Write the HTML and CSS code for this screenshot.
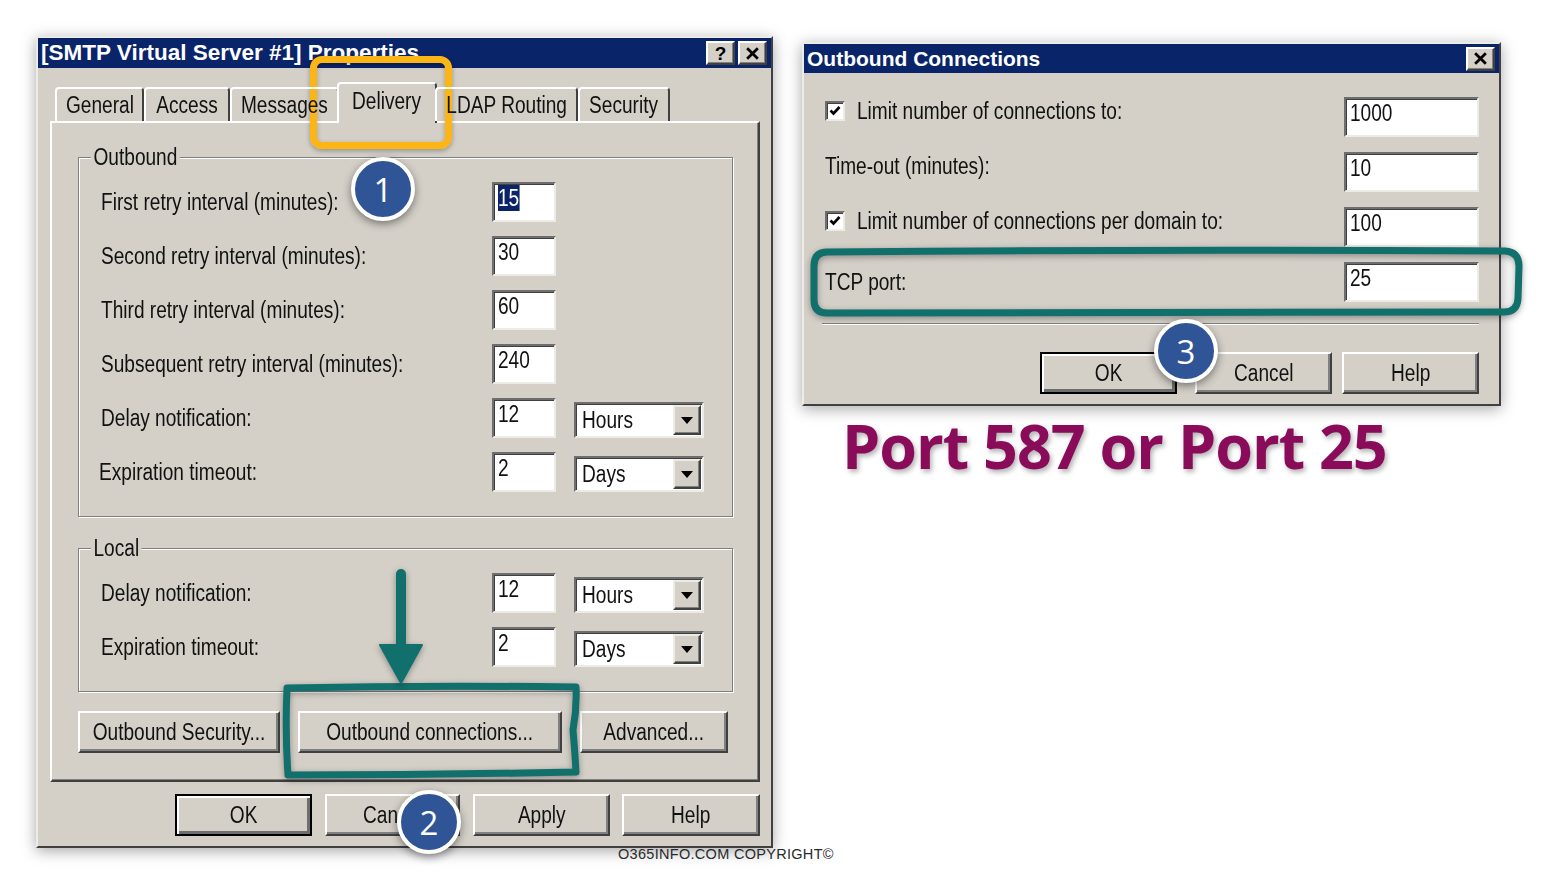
FILE: index.html
```html
<!DOCTYPE html>
<html>
<head>
<meta charset="utf-8">
<title>SMTP Outbound Connections</title>
<link rel="stylesheet" href="styles.css">
</head>
<body>
<div class="page">
  <div class="col-left">
    <div class="dlg dlg-main">
      <div class="titlebar">
        <span class="title">[SMTP Virtual Server #1] Properties</span>
        <div class="tb-btns">
          <span class="tbb tbb-q">?</span>
          <span class="tbb"><svg class="xicon" viewBox="0 0 14 12"><path d="M2 1 L12 11 M12 1 L2 11" stroke="#000" stroke-width="2.6" fill="none"/></svg></span>
        </div>
      </div>
      <div class="main-body">
        <div class="tabs">
          <div class="tab tab-general"><span class="t">General</span></div>
          <div class="tab tab-access"><span class="t">Access</span></div>
          <div class="tab tab-messages"><span class="t">Messages</span></div>
          <div class="tab tab-delivery active"><span class="t">Delivery</span></div>
          <div class="tab tab-ldap"><span class="t">LDAP Routing</span></div>
          <div class="tab tab-security"><span class="t">Security</span></div>
        </div>
        <div class="panel">
          <div class="group">
            <div class="legend"><span class="t">Outbound</span></div>
            <div class="rows">
              <div class="lbl"><span class="t">First retry interval (minutes):</span></div>
              <div class="input"><span class="t"><span class="sel">15</span></span></div>
              <div></div>
              <div class="lbl"><span class="t">Second retry interval (minutes):</span></div>
              <div class="input"><span class="t">30</span></div>
              <div></div>
              <div class="lbl"><span class="t">Third retry interval (minutes):</span></div>
              <div class="input"><span class="t">60</span></div>
              <div></div>
              <div class="lbl"><span class="t">Subsequent retry interval (minutes):</span></div>
              <div class="input"><span class="t">240</span></div>
              <div></div>
              <div class="lbl"><span class="t">Delay notification:</span></div>
              <div class="input"><span class="t">12</span></div>
              <div class="combo"><span class="combo-text"><span class="t">Hours</span></span><span class="combo-btn"><svg class="tri" viewBox="0 0 12 7"><path d="M0 0 H12 L6 7 Z" fill="#000"/></svg></span></div>
              <div class="lbl lbl-shift"><span class="t">Expiration timeout:</span></div>
              <div class="input"><span class="t">2</span></div>
              <div class="combo"><span class="combo-text"><span class="t">Days</span></span><span class="combo-btn"><svg class="tri" viewBox="0 0 12 7"><path d="M0 0 H12 L6 7 Z" fill="#000"/></svg></span></div>
            </div>
          </div>
          <div class="group group-local">
            <div class="legend"><span class="t">Local</span></div>
            <div class="rows">
              <div class="lbl"><span class="t">Delay notification:</span></div>
              <div class="input"><span class="t">12</span></div>
              <div class="combo"><span class="combo-text"><span class="t">Hours</span></span><span class="combo-btn"><svg class="tri" viewBox="0 0 12 7"><path d="M0 0 H12 L6 7 Z" fill="#000"/></svg></span></div>
              <div class="lbl"><span class="t">Expiration timeout:</span></div>
              <div class="input"><span class="t">2</span></div>
              <div class="combo"><span class="combo-text"><span class="t">Days</span></span><span class="combo-btn"><svg class="tri" viewBox="0 0 12 7"><path d="M0 0 H12 L6 7 Z" fill="#000"/></svg></span></div>
            </div>
          </div>
          <div class="btn-row">
            <div class="btn b-osec"><span class="t">Outbound Security...</span></div>
            <div class="btn b-ocon"><span class="t">Outbound connections...</span></div>
            <div class="btn b-adv"><span class="t">Advanced...</span></div>
          </div>
        </div>
        <div class="footer">
          <div class="btn btn-default b-ok"><span class="t">OK</span></div>
          <div class="btn b-cancel"><span class="t">Cancel</span></div>
          <div class="btn b-apply"><span class="t">Apply</span></div>
          <div class="btn b-help"><span class="t">Help</span></div>
        </div>
      </div>
    </div>
    <div class="copyright">O365INFO.COM COPYRIGHT©</div>
  </div>

  <div class="col-right">
    <div class="dlg dlg-conn">
      <div class="titlebar titlebar-conn">
        <span class="title title-conn">Outbound Connections</span>
        <div class="tb-btns">
          <span class="tbb"><svg class="xicon" viewBox="0 0 14 12"><path d="M2 1 L12 11 M12 1 L2 11" stroke="#000" stroke-width="2.6" fill="none"/></svg></span>
        </div>
      </div>
      <div class="conn-body">
        <div class="conn-rows">
          <div class="lbl chk-lbl lbl-up"><span class="check"><svg viewBox="0 0 14 14"><path d="M2.5 6.5 L5.5 9.5 L11.5 3" stroke="#000" stroke-width="2.6" fill="none"/></svg></span><span class="t">Limit number of connections to:</span></div>
          <div class="input"><span class="t">1000</span></div>
          <div class="lbl lbl-up"><span class="t">Time-out (minutes):</span></div>
          <div class="input"><span class="t">10</span></div>
          <div class="lbl chk-lbl lbl-up"><span class="check"><svg viewBox="0 0 14 14"><path d="M2.5 6.5 L5.5 9.5 L11.5 3" stroke="#000" stroke-width="2.6" fill="none"/></svg></span><span class="t">Limit number of connections per domain to:</span></div>
          <div class="input"><span class="t">100</span></div>
          <div class="lbl"><span class="t">TCP port:</span></div>
          <div class="input"><span class="t">25</span></div>
        </div>
        <div class="sep"></div>
        <div class="conn-footer">
          <div class="btn btn-default b-cok"><span class="t">OK</span></div>
          <div class="btn b-ccancel"><span class="t">Cancel</span></div>
          <div class="btn b-chelp"><span class="t">Help</span></div>
        </div>
      </div>
    </div>
    <div class="port">Port 587 or Port 25</div>
  </div>
</div>

<div class="hl-yellow"></div>

<svg class="ann ann-rect1" viewBox="0 0 310 105" width="310" height="105">
  <path d="M9 10 Q150 7 298 9 Q299 30 295 52 Q297 75 298 94 Q150 97 10 97 Q7 55 9 10 Z" fill="none" stroke="#11706b" stroke-width="7" stroke-linejoin="round"/>
</svg>
<svg class="ann ann-rect2" viewBox="0 0 725 82" width="725" height="82">
  <path d="M22 10 Q360 7 700 9 Q714 10 714 24 L713 57 Q712 70 699 70 Q360 72 22 71 Q9 71 9 58 L9 24 Q9 10 22 10 Z" fill="none" stroke="#11706b" stroke-width="7" stroke-linejoin="round"/>
</svg>
<svg class="ann ann-arrow" viewBox="0 0 52 125" width="52" height="125">
  <path d="M26 9 L26 84" stroke="#11706b" stroke-width="10" stroke-linecap="round"/>
  <path d="M5 80 L47 80 L26 118 Z" fill="#11706b" stroke="#11706b" stroke-width="2" stroke-linejoin="round"/>
</svg>

<div class="badge badge-1">1</div>
<div class="badge badge-2">2</div>
<div class="badge badge-3">3</div>
</body>
</html>
```

FILE: styles.css
```css
* { box-sizing: border-box; }
html, body { margin: 0; padding: 0; background: #fff; }
body {
  width: 1557px;
  height: 894px;
  overflow: hidden;
  position: relative;
  font-family: "Liberation Sans", Arial, sans-serif;
  color: #111;
}

/* narrow "MS Sans Serif"-like text: Arial metrics squeezed horizontally */
.t {
  display: inline-block;
  white-space: nowrap;
  transform: scaleX(0.83);
  transform-origin: left center;
}

.page {
  display: flex;
  align-items: flex-start;
  padding: 36px 0 0 36px;
  gap: 29px;
}

.col-left { width: 737px; flex: none; display: flex; flex-direction: column; }
.col-right { width: 699px; flex: none; display: flex; flex-direction: column; padding-top: 6px; }

/* ---------- window chrome ---------- */
.dlg {
  background: #d4d0c8;
  border: 2px solid;
  border-color: #ecebe6 #404040 #404040 #ecebe6;
  box-shadow: 0 3px 14px rgba(0, 0, 0, 0.35);
}
.dlg-main { width: 737px; }
.dlg-conn { width: 699px; }

.titlebar {
  height: 30px;
  background: #0a246a;
  display: flex;
  align-items: center;
  justify-content: space-between;
  padding: 0 4px 0 3px;
  color: #fff;
}
.titlebar-conn { height: 29px; }
.title {
  font-weight: bold;
  font-size: 22.5px;
  white-space: nowrap;
}
.title-conn { font-size: 21px; }
.tb-btns { display: flex; gap: 3px; }
.tbb {
  width: 29px;
  height: 24px;
  background: #d4d0c8;
  border: 2px solid;
  border-color: #fff #404040 #404040 #fff;
  box-shadow: inset -1px -1px #808080;
  display: flex;
  align-items: center;
  justify-content: center;
  color: #000;
  font-weight: bold;
  font-size: 19px;
  line-height: 1;
}
.xicon { width: 15px; height: 13px; }

/* ---------- properties dialog ---------- */
.main-body { padding: 14px 11px 10px 12px; }

.tabs {
  display: flex;
  align-items: flex-end;
  height: 39px;
  padding-left: 5px;
  position: relative;
  z-index: 1;
}
.tab {
  height: 34px;
  border: 2px solid;
  border-bottom: none;
  border-color: #fff #404040 transparent #fff;
  border-radius: 4px 4px 0 0;
  font-size: 23px;
  line-height: 32px;
  display: flex;
  justify-content: center;
}
.tab .t { transform-origin: center; }
.tab-general { width: 89px; }
.tab-access { width: 86px; }
.tab-messages { width: 109px; }
.tab-delivery { width: 100px; }
.tab-ldap { width: 143px; }
.tab-security { width: 92px; }
.tab.active {
  height: 41px;
  margin: 0 -2px -2px;
  background: #d4d0c8;
  line-height: 34px;
}

.panel {
  height: 661px;
  border: 2px solid;
  border-color: #fff #404040 #404040 #fff;
  box-shadow: inset -1px -1px #808080;
  padding: 34px 25px 0 26px;
}

.group {
  border: 1px solid #808080;
  box-shadow: inset 1px 1px #fff, 1px 1px #fff;
  padding: 0 28px 24px 22px;
}
.group-local { margin-top: 31px; }
.legend {
  display: table;
  margin: -13px 0 13px -10px;
  padding: 0 3px;
  background: #d4d0c8;
  font-size: 23px;
  line-height: 24px;
  transform: scaleX(0.83);
  transform-origin: left center;
}
.legend .t { transform: none; }

.rows {
  display: grid;
  grid-template-columns: 1fr 64px 130px;
  column-gap: 18px;
  row-gap: 14px;
  align-items: center;
}
.lbl { font-size: 23px; line-height: 26px; white-space: nowrap; }
.lbl-shift { margin-left: -2px; }

.input {
  height: 40px;
  background: #fff;
  border: 2px solid;
  border-color: #6e6e6e #ecebe6 #ecebe6 #6e6e6e;
  box-shadow: inset 1px 1px #404040;
  font-size: 23px;
  line-height: 26px;
  padding: 1px 0 0 4px;
  color: #111;
}
.sel { background: #0a246a; color: #fff; }

.combo {
  align-self: end;
  height: 36px;
  background: #fff;
  border: 2px solid;
  border-color: #6e6e6e #ecebe6 #ecebe6 #6e6e6e;
  box-shadow: inset 1px 1px #404040;
  display: flex;
}
.combo-text { flex: 1; font-size: 23px; line-height: 32px; padding-left: 6px; }
.combo-btn {
  width: 28px;
  margin: 1px;
  background: #d4d0c8;
  border: 2px solid;
  border-color: #ecebe6 #404040 #404040 #ecebe6;
  box-shadow: inset -1px -1px #808080;
  display: flex;
  align-items: center;
  justify-content: center;
}
.tri { width: 12px; height: 7px; }

.btn {
  height: 42px;
  background: #d4d0c8;
  border: 2px solid;
  border-color: #fff #404040 #404040 #fff;
  box-shadow: inset -2px -2px #808080;
  display: flex;
  align-items: center;
  justify-content: center;
  font-size: 23px;
  line-height: 26px;
  color: #111;
}
.btn .t { transform-origin: center; }
.btn-default {
  border-color: #000;
  box-shadow: inset 2px 2px #fff, inset -3px -3px #6e6e6e;
}

.btn-row { display: flex; gap: 18px; margin-top: 19px; }
.b-osec { width: 202px; }
.b-ocon { width: 264px; }
.b-adv { width: 148px; }

.footer { display: flex; justify-content: flex-end; gap: 13px; margin-top: 12px; }
.b-ok { width: 137px; }
.b-cancel { width: 135px; }
.b-apply { width: 137px; margin-right: -1px; }
.b-help { width: 138px; }

.copyright {
  margin: -2px 0 0 582px;
  font-size: 14.5px;
  line-height: 16px;
  letter-spacing: 0.3px;
  color: #2a2a2a;
  white-space: nowrap;
}

/* ---------- outbound connections dialog ---------- */
.conn-body { padding: 24px 20px 10px 21px; }
.conn-rows {
  display: grid;
  grid-template-columns: 1fr 135px;
  grid-auto-rows: 40px;
  row-gap: 15px;
  align-items: center;
}
.lbl-up { margin-bottom: 12px; }
.chk-lbl { display: flex; align-items: center; gap: 12px; }
.check {
  width: 20px;
  height: 20px;
  background: #fff;
  border: 2px solid;
  border-color: #6e6e6e #ecebe6 #ecebe6 #6e6e6e;
  box-shadow: inset 1px 1px #404040;
  display: flex;
  align-items: center;
  justify-content: center;
}
.check svg { width: 14px; height: 14px; }

.sep {
  margin: 21px 0 0 -3px;
  height: 2px;
  border-top: 1px solid #808080;
  border-bottom: 1px solid #fff;
}
.conn-footer { display: flex; justify-content: flex-end; gap: 10px; margin-top: 27px; }
.b-cok { width: 137px; margin-right: 8px; }
.b-ccancel { width: 137px; }
.b-chelp { width: 137px; }

.port {
  margin: 5px 0 0 40px;
  font-family: "Open Sans", "Liberation Sans", sans-serif;
  font-weight: 700;
  font-size: 61px;
  line-height: 70px;
  letter-spacing: -1px;
  color: #8a0b5a;
  white-space: nowrap;
  text-shadow: 2px 3px 5px rgba(0, 0, 0, 0.3);
}

/* ---------- annotations (overlays) ---------- */
.hl-yellow {
  position: absolute;
  left: 310px;
  top: 56px;
  width: 142px;
  height: 93px;
  border: 7px solid #fbb615;
  border-radius: 12px;
  box-shadow: 0 2px 5px rgba(0, 0, 0, 0.3), inset 0 2px 5px rgba(0, 0, 0, 0.25);
}
.ann { position: absolute; filter: drop-shadow(0 2px 3px rgba(0, 0, 0, 0.35)); }
.ann-rect1 { left: 278px; top: 678px; }
.ann-rect2 { left: 805px; top: 242px; }
.ann-arrow { left: 375px; top: 565px; }

.badge {
  position: absolute;
  width: 64px;
  height: 64px;
  border-radius: 50%;
  background: #2f5597;
  border: 4px solid #fff;
  box-shadow: 0 3px 8px rgba(0, 0, 0, 0.45);
  color: #fff;
  font-family: "Open Sans", "Liberation Sans", sans-serif;
  font-size: 33px;
  line-height: 1;
  display: flex;
  align-items: center;
  justify-content: center;
}
.badge-1 { left: 351px; top: 157px; }
.badge-2 { left: 397px; top: 790px; }
.badge-3 { left: 1154px; top: 319px; }
```
